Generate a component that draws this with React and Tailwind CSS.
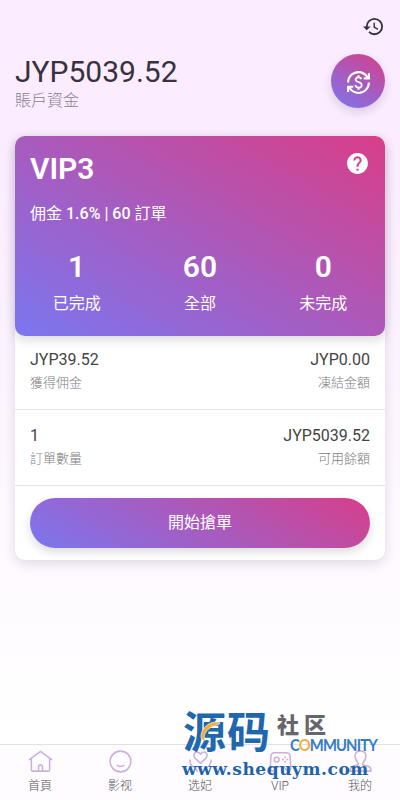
import { MdCurrencyExchange, MdHelp, MdHistory } from 'react-icons/md'

const stats = [
  { value: '1', label: '已完成' },
  { value: '60', label: '全部' },
  { value: '0', label: '未完成' },
]

const rows = [
  [
    { value: 'JYP39.52', label: '獲得佣金' },
    { value: 'JYP0.00', label: '凍結金額' },
  ],
  [
    { value: '1', label: '訂單數量' },
    { value: 'JYP5039.52', label: '可用餘額' },
  ],
]

const HomeIcon = () => (
  <>
    <path d="M1.500 11 13 2.500 24.500 11M3.500 10v11.500q0 1.500 1.500 1.500h16q1.500 0 1.500-1.500V10" />
    <path d="M11 23v-4.500q0-2 2-2t2 2V23" />
  </>
)

const SmileIcon = () => (
  <>
    <circle cx="13" cy="13" r="10.800" />
    <path d="M9.500 17q3.500 2.400 7 0" />
  </>
)

const HeartIcon = () => (
  <>
    <path d="M13 15 7.300 9.500C3.500 4.500 10 .500 13 5.500 16 .500 22.500 4.500 18.700 9.500z" />
    <path d="M2 11.500q0 6 5.500 8l2 3.500M24 11.500q0 6-5.500 8l-2 3.500" />
  </>
)

const GamepadIcon = () => (
  <>
    <path d="M7 4h12q3.800 0 4 4l.7 11c.2 4.500-3.500 5-5.200 2L17 18.500H9L7.500 21c-1.700 3-5.400 2.500-5.200-2L3 8q.2-4 4-4z" />
    <circle cx="9" cy="11" r="2.500" />
    <path d="M15.500 11h.1M20 11h.1M17.800 8.700h.1M17.800 13.300h.1" strokeWidth="2" />
  </>
)

const PersonIcon = () => (
  <path d="M10.500 14.500C6 10 6 2 13 2s7 8 2.500 12.500q-.8 2 1.500 2.500l4 1q3 1 3 5H2q0-4 3-5l4-1q2.300-.500 1.500-2.500z" />
)

const tabs = [
  { label: '首頁', Icon: HomeIcon },
  { label: '影视', Icon: SmileIcon },
  { label: '选妃', Icon: HeartIcon },
  { label: 'VIP', Icon: GamepadIcon },
  { label: '我的', Icon: PersonIcon },
]

const Header = () => (
  <header className="px-[15px]">
    <div className="flex h-[54px] items-center justify-end">
      <MdHistory size={23} className="-mt-[2px] text-[#343040]" />
    </div>
    <div className="flex h-[54px] items-start justify-between">
      <div>
        <h1 className="text-[30px] leading-9 text-[#37323b]">JYP5039.52</h1>
        <p className="mt-px text-base leading-5 font-light text-[#898190]">賬戶資金</p>
      </div>
      <button className="flex size-[54px] items-center justify-center rounded-full bg-[linear-gradient(30deg,#7b76f0,#d63f8a)] pt-0.5 text-white shadow-[0_4px_10px_rgba(60,30,80,0.16)]">
        <MdCurrencyExchange size={25} />
      </button>
    </div>
  </header>
)

const VipCard = () => (
  <div className="h-[200px] rounded-[10px] bg-[linear-gradient(30deg,#7b76f0,#d93e88)] px-[15px] pt-[15px] text-white shadow-[0_4px_12px_rgba(0,0,0,0.15)]">
    <div className="flex items-start justify-between">
      <h2 className="text-[30px] leading-9 font-semibold">VIP3</h2>
      <MdHelp size={25} />
    </div>
    <p className="mt-[17px] text-base leading-5 font-medium">
      <span className="font-normal">佣金</span> 1.6% | 60 <span className="font-normal">訂單</span>
    </p>
    <div className="-mx-[15px] mt-[25px] grid grid-cols-3 text-center">
      {stats.map((s) => (
        <div key={s.label}>
          <div className="text-[30px] leading-9 font-semibold">{s.value}</div>
          <div className="mt-[9px] text-base leading-5">{s.label}</div>
        </div>
      ))}
    </div>
  </div>
)

const Watermark = () => (
  <div className="pointer-events-none absolute top-[711px] left-[181px] h-[72px] w-[200px]">
    <div className="absolute top-px left-[2px] text-[43px] leading-[43px] font-bold tracking-[1px] whitespace-nowrap text-[#2067ae]">
      源码
    </div>
    <svg className="absolute top-[9px] left-[17px]" width="26" height="26" viewBox="0 0 26 26" fill="none">
      <path d="M22 3C15 0 6 5 3.500 13c-1.500 5 0 8 4.500 7-4-2-1-13 13-15.500z" fill="#f1ad35" stroke="#fff" strokeWidth=".6" />
    </svg>
    <div className="absolute top-[3px] left-[96px] text-[22px] leading-6 font-black tracking-[5px] whitespace-nowrap text-[#66666a]">
      社区
    </div>
    <div className="absolute top-[25px] left-[109px] origin-left scale-x-[0.87] font-['Lato'] text-[17px] leading-[18px] font-bold tracking-[-1px] whitespace-nowrap text-[#347dc2]">
      C<span className="text-[#efb13b]">O</span>MMUNITY
    </div>
    <div className="absolute top-[46px] left-px font-['DejaVu_Serif'] text-[17px] leading-6 font-bold tracking-[0.55px] whitespace-nowrap text-[#1d63ac]">
      www.shequym.com
    </div>
  </div>
)

export default function App() {
  return (
    <div className="relative flex h-[800px] w-[400px] flex-col overflow-hidden bg-[linear-gradient(180deg,#fbecff_0%,#fbecff_15%,#ffffff_92%)] font-['Roboto','Noto_Sans_CJK_TC',sans-serif]">
      <Header />

      <main className="mt-7 flex-1 px-[15px]">
        <section className="h-[424px] rounded-[10px] bg-white shadow-[0_4px_12px_rgba(60,30,80,0.14)]">
          <VipCard />
          <div className="grid grid-rows-[74px_76px]">
            {rows.map((row) => (
              <div key={row[0].label} className="flex justify-between border-b border-[#e3e3e5] px-[15px] pt-[14px] last:pt-4">
                {row.map((item, i) => (
                  <div key={item.label} className={i === 1 ? 'text-right' : ''}>
                    <div className="text-base leading-5 text-[#444446]">{item.value}</div>
                    <div className="mt-[3px] text-[13px] leading-5 font-light text-[#7d7d7f]">{item.label}</div>
                  </div>
                ))}
              </div>
            ))}
          </div>
          <div className="px-[15px] pt-3">
            <button className="h-[50px] w-full rounded-full bg-[linear-gradient(30deg,#7b76f0,#d63f8a)] text-base font-normal text-white shadow-[0_4px_10px_rgba(0,0,0,0.14)]">
              開始搶單
            </button>
          </div>
        </section>
      </main>

      <nav className="grid h-14 grid-cols-5 border-t border-[#e1e1e3] bg-[#fefcff]">
        {tabs.map(({ label, Icon }) => (
          <div key={label} className="flex flex-col items-center pt-1">
            <svg width="25" height="25" viewBox="0 0 26 26" fill="none" stroke="#cbb2d6" strokeWidth="1.600" strokeLinecap="round" strokeLinejoin="round">
              <Icon />
            </svg>
            <span className="mt-0.5 text-xs leading-5 font-light text-[#565258]">{label}</span>
          </div>
        ))}
      </nav>

      <Watermark />
    </div>
  )
}
